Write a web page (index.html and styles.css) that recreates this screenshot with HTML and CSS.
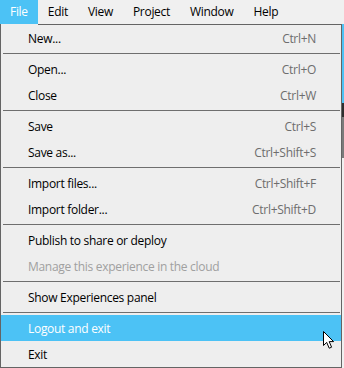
FILE: index.html
```html
<!DOCTYPE html>
<html lang="en">
<head>
    <meta charset="UTF-8">
    <meta name="viewport" content="width=device-width, initial-scale=1.0">
    <title>File menu</title>
    <link rel="stylesheet" href="styles.css">
</head>
<body>
    <div class="menubar">
        <span class="menubar-item active">File</span>
        <span class="menubar-item">Edit</span>
        <span class="menubar-item">View</span>
        <span class="menubar-item">Project</span>
        <span class="menubar-item">Window</span>
        <span class="menubar-item">Help</span>
    </div>

    <div class="menu">
        <div class="menu-item"><span>New...</span><span class="shortcut">Ctrl+N</span></div>
        <div class="separator"></div>
        <div class="menu-item"><span>Open...</span><span class="shortcut">Ctrl+O</span></div>
        <div class="menu-item"><span>Close</span><span class="shortcut">Ctrl+W</span></div>
        <div class="separator"></div>
        <div class="menu-item"><span>Save</span><span class="shortcut">Ctrl+S</span></div>
        <div class="menu-item"><span>Save as...</span><span class="shortcut">Ctrl+Shift+S</span></div>
        <div class="separator"></div>
        <div class="menu-item"><span>Import files...</span><span class="shortcut">Ctrl+Shift+F</span></div>
        <div class="menu-item"><span>Import folder...</span><span class="shortcut">Ctrl+Shift+D</span></div>
        <div class="separator"></div>
        <div class="menu-item"><span>Publish to share or deploy</span></div>
        <div class="menu-item disabled"><span>Manage this experience in the cloud</span></div>
        <div class="separator"></div>
        <div class="menu-item"><span>Show Experiences panel</span></div>
        <div class="separator"></div>
        <div class="menu-item hover">
            <span>Logout and exit</span>
            <!-- mouse pointer -->
            <svg class="pointer" width="12" height="18" viewBox="0 0 12 18">
                <path d="M0.5 0.5 L0.5 14.5 L3.7 11.4 L6.2 17.2 L8.6 16.2 L6.2 10.6 L10.6 10.6 Z" fill="#fff" stroke="#000" stroke-width="1" stroke-linejoin="miter"/>
            </svg>
        </div>
        <div class="menu-item"><span>Exit</span></div>
    </div>
</body>
</html>
```

FILE: styles.css
```css
* {
    margin: 0;
    padding: 0;
    box-sizing: border-box;
}

body {
    width: 344px;
    height: 368px;
    overflow: hidden;
    font-family: 'Open Sans', 'Noto Sans', sans-serif;
    font-size: 12px;
    letter-spacing: -0.3px;
    color: #000;
    background:
        linear-gradient(to bottom, #f0f0f0 0 24px, #4cc2f5 24px 103px, #2e2e2e 103px 117px, #7a7a7a 117px 158px, #f0f0f0 158px) right top / 2px 100% no-repeat,
        #f0f0f0;
}

.menubar {
    display: flex;
    height: 24px;
}

.menubar-item {
    padding: 0 10px;
    line-height: 24px;
}

.menubar-item.active {
    background: #4cc2f5;
    color: #fff;
}

.menu {
    position: relative;
    width: 342px;
    height: 344px;
    background: #eeeeee;
    border: 1px solid #646464;
}

/* the open tab joins the menu without a line */
.menu::before {
    content: "";
    position: absolute;
    top: -1px;
    left: 0;
    width: 37px;
    height: 1px;
    background: #eeeeee;
}

.menu-item {
    position: relative;
    display: flex;
    justify-content: space-between;
    align-items: center;
    height: 26px;
    padding: 0 25px 0 27px;
}

.shortcut {
    color: #6d6d6d;
}

.menu-item.disabled {
    color: #a0a0a0;
}

.menu-item.hover {
    background: #4cc2f5;
    color: #fff;
}

.separator {
    height: 1px;
    margin: 2px 1px 2px 2px;
    background: #6e6e6e;
}

.pointer {
    position: absolute;
    left: 322px;
    top: 16px;
}
```
